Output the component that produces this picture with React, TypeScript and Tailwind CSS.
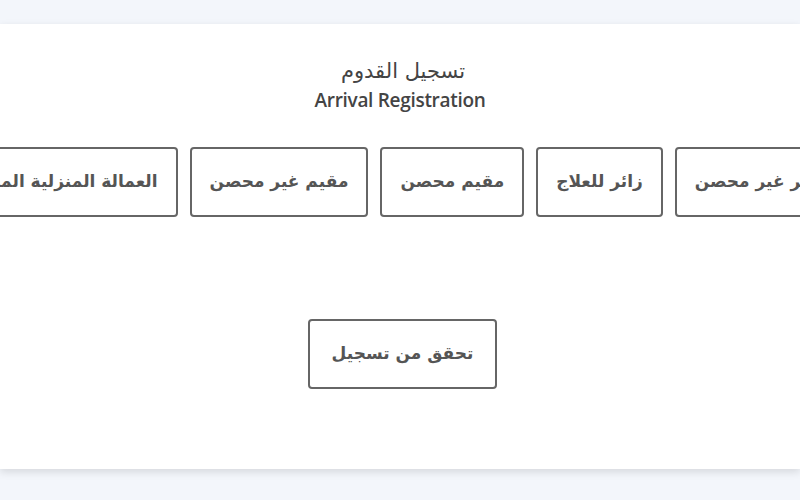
import React from "react";

const types = [
  "زائر غير محصن",
  "زائر للعلاج",
  "مقيم محصن",
  "مقيم غير محصن",
  "العمالة المنزلية المحصنة",
];

export default function App() {
  return (
    <div className="min-h-[500px] w-[800px] overflow-hidden bg-[#f3f6fb] pt-[24px] pb-[31px]">
      {/* Card */}
      <div className="h-[445px] w-full overflow-hidden bg-white shadow-[0_3px_8px_rgba(0,0,0,0.12)]">
        <div className="flex flex-col items-center pt-[33px] text-[#444]">
          <h1 className="ml-[6px] text-[21px] leading-[28px] font-normal font-['DejaVu_Sans',sans-serif]">
            تسجيل القدوم
          </h1>
          <p className="mt-[2px] text-[19px] leading-[26px] font-semibold font-['Open_Sans',sans-serif] tracking-[-0.3px]">
            Arrival Registration
          </p>
        </div>

        {/* Types */}
        <div
          dir="rtl"
          className="mt-[34px] flex justify-center gap-[12px] pr-[22px] font-['DejaVu_Sans',sans-serif]"
        >
          {types.map((t) => (
            <button
              key={t}
              className="h-[70px] shrink-0 whitespace-nowrap rounded-[4px] border-2 border-[#666] bg-white px-[18px] text-[17px] font-bold text-[#555]"
            >
              {t}
            </button>
          ))}
        </div>

        <div className="mt-[102px] flex justify-center" dir="rtl">
          <button className="mr-[-5px] h-[70px] w-[189px] rounded-[4px] border-2 border-[#666] bg-white text-[17px] font-bold text-[#555] font-['DejaVu_Sans',sans-serif]">
            تحقق من تسجيل
          </button>
        </div>
      </div>
    </div>
  );
}
